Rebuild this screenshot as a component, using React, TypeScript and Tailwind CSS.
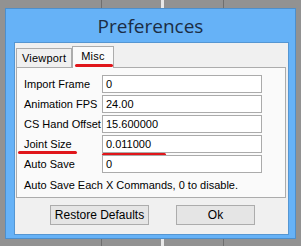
const fields = [
  { label: "Import Frame", value: "0" },
  { label: "Animation FPS", value: "24.00" },
  { label: "CS Hand Offset", value: "15.600000" },
  { label: "Joint Size", value: "0.011000", marked: true },
  { label: "Auto Save", value: "0" },
];

function Field({ label, value, marked }: { label: string; value: string; marked?: boolean }) {
  return (
    <div className="flex items-center h-[18px] mb-[2px]">
      <div className="relative shrink-0 w-[85px] pl-[7px] whitespace-nowrap text-[11px] leading-[18px] text-black">
        {label}
        {marked && <span className="absolute left-[1px] top-[16px] w-[59px] h-[3px] rounded-full bg-[#e0161b]" />}
      </div>
      <div className="relative shrink-0 w-[160px] h-[18px] bg-white border border-[#ababab] px-[3px] text-[11px] leading-[16px] text-black">
        {value}
        {marked && <span className="absolute -left-[1px] top-[17px] w-[64px] h-[3px] rounded-full bg-[#e0161b]" />}
      </div>
    </div>
  );
}

export default function App() {
  return (
    <div
      className="relative w-[301px] h-[246px] bg-[#929292] overflow-hidden"
      style={{ fontFamily: '"Liberation Sans", Arial, sans-serif' }}
    >
      {/* background strokes behind the dialog */}
      <div className="absolute left-[101px] top-0 w-px h-full bg-[#6f6f6f]" />
      <div className="absolute left-[161px] top-0 w-[3px] h-full bg-[#e8e8e8]" />
      <div className="absolute left-[223px] top-0 w-px h-full bg-[#6f6f6f]" />

      <div className="relative ml-[5px] mt-[8px] w-[291px] h-[231px] bg-[#66b2f7] border border-[#4d8fcc] flex flex-col">
        <div
          className="h-[33px] flex items-center justify-center text-[19px] text-[#1b2d44] pt-[2px]"
          style={{ fontFamily: '"Open Sans", "Noto Sans", sans-serif' }}
        >
          Preferences
        </div>
        <div className="ml-[8px] w-[275px] h-[193px] bg-[#f0f0f0] border border-[#5596d2] pl-[1px] pt-[2px]">
          <div className="flex items-end h-[22px]">
            <div className="h-[19px] px-[5px] border border-b-0 border-[#acacac] bg-[#f0f0f0] text-[11px] tracking-[0.2px] leading-[18px] text-black">
              Viewport
            </div>
            <div className="relative h-[22px] -mb-px z-10 px-[8px] border border-b-0 border-[#acacac] bg-[#fafafa] text-[11px] tracking-[0.2px] leading-[18px] text-black">
              Misc
              <span className="absolute left-[2px] top-[17px] w-[38px] h-[3px] rounded-full bg-[#e0161b]" />
            </div>
          </div>
          <div className="w-[270px] h-[131px] border border-[#acacac] bg-[#fafafa] pt-[7px]">
            {fields.map((f) => (
              <Field key={f.label} label={f.label} value={f.value} marked={f.marked} />
            ))}
            <div className="pl-[7px] pt-[1px] whitespace-nowrap text-[11px] leading-[18px] text-black">
              Auto Save Each X Commands, 0 to disable.
            </div>
          </div>
          <div className="flex gap-[27px] pl-[34px] pt-[7px]">
            <button className="w-[99px] h-[20px] border border-[#acacac] bg-[#e5e5e5] text-[12px] text-black">
              Restore Defaults
            </button>
            <button className="w-[79px] h-[20px] border border-[#acacac] bg-[#e5e5e5] text-[12px] text-black">
              Ok
            </button>
          </div>
        </div>
      </div>
    </div>
  );
}
